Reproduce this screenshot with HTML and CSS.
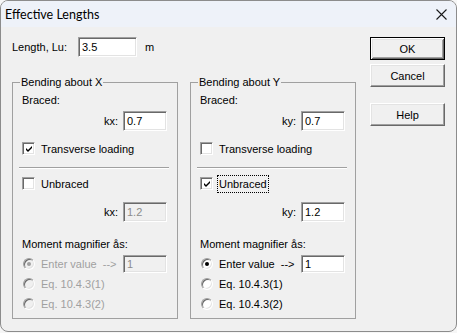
FILE: index.html
```html
<!DOCTYPE html>
<html>
<head>
<meta charset="utf-8">
<link rel="stylesheet" href="styles.css">
</head>
<body>
<div class="window">
  <div class="titlebar">
    <span class="title">Effective Lengths</span>
    <svg class="close" viewBox="0 0 11 11"><path d="M0.5 0.5 L10.5 10.5 M10.5 0.5 L0.5 10.5" stroke="#1a1a1a" stroke-width="1.1" fill="none"/></svg>
  </div>
  <div class="content">
    <div class="main">
      <div class="length-row">
        <span class="lbl">Length, Lu:</span>
        <span class="field len">3.5</span>
        <span class="unit">m</span>
      </div>
      <div class="groups">
        <div class="group">
          <div class="gtitle">Bending about X</div>
          <div class="trow braced">Braced:</div>
          <div class="frow first"><span>kx:</span><span class="field k">0.7</span></div>
          <div class="crow first"><span class="check"><svg viewBox="0 0 9 9"><polygon points="1,3 3,5 7,1 7,3 3,7 1,5" fill="#000"/></svg></span><span>Transverse loading</span></div>
          <div class="sep"></div>
          <div class="crow second"><span class="check"></span><span>Unbraced</span></div>
          <div class="frow second"><span>kx:</span><span class="field k disabled">1.2</span></div>
          <div class="trow moment">Moment magnifier ås:</div>
          <div class="rrow first disabled"><span class="radio on"></span><span>Enter value&nbsp; --&gt;</span><span class="field one disabled">1</span></div>
          <div class="rrow disabled"><span class="radio"></span><span>Eq. 10.4.3(1)</span></div>
          <div class="rrow disabled"><span class="radio"></span><span>Eq. 10.4.3(2)</span></div>
        </div>
        <div class="group">
          <div class="gtitle">Bending about Y</div>
          <div class="trow braced">Braced:</div>
          <div class="frow first"><span>ky:</span><span class="field k">0.7</span></div>
          <div class="crow first"><span class="check"></span><span>Transverse loading</span></div>
          <div class="sep"></div>
          <div class="crow second"><span class="check"><svg viewBox="0 0 9 9"><polygon points="1,3 3,5 7,1 7,3 3,7 1,5" fill="#000"/></svg></span><span class="focus">Unbraced</span></div>
          <div class="frow second"><span>ky:</span><span class="field k">1.2</span></div>
          <div class="trow moment">Moment magnifier ås:</div>
          <div class="rrow first"><span class="radio on"></span><span>Enter value&nbsp; --&gt;</span><span class="field one">1</span></div>
          <div class="rrow"><span class="radio"></span><span>Eq. 10.4.3(1)</span></div>
          <div class="rrow"><span class="radio"></span><span>Eq. 10.4.3(2)</span></div>
        </div>
      </div>
    </div>
    <div class="buttons">
      <div class="btn default">OK</div>
      <div class="btn cancel">Cancel</div>
      <div class="btn help">Help</div>
    </div>
  </div>
</div>
</body>
</html>
```
FILE: styles.css
```css
* { box-sizing: border-box; }
html, body { margin: 0; padding: 0; }
body {
  background: #f6f6f6;
  font-family: "Liberation Sans", Arial, sans-serif;
  font-size: 11px;
  color: #000;
}
.window {
  width: 457px;
  height: 332px;
  border: 1px solid #8c8c8c;
  border-radius: 8px;
  overflow: hidden;
  background: #f0f0f0;
  display: flex;
  flex-direction: column;
}
.titlebar {
  height: 26px;
  flex: none;
  background: #eef2f9;
  display: flex;
  align-items: center;
  justify-content: space-between;
  padding: 0 9px 0 4px;
}
.title {
  font-family: Lato, "Noto Sans", sans-serif;
  font-size: 12.5px;
  color: #000;
}
.close { width: 11px; height: 11px; display: block; }
.content {
  display: flex;
  padding: 10px 0 0 11px;
}
.main { width: 344px; flex: none; }
.length-row { display: flex; align-items: center; height: 20px; }
.lbl { width: 66px; }
.unit { margin-left: 8px; }
.field {
  height: 20px;
  background: #fff;
  border: 1px solid;
  border-color: #a0a0a0 #fff #fff #a0a0a0;
  box-shadow: inset 1px 1px #696969, inset -1px -1px #e3e3e3;
  padding: 0 3px;
  display: flex;
  align-items: center;
  white-space: nowrap;
}
.field.disabled { background: #f0f0f0; color: #8c8c8c; }
.len { width: 59px; }
.k { width: 44px; }
.one { width: 44px; height: 18px; margin-left: auto; }
.groups { display: flex; gap: 12px; margin-top: 25px; }
.group {
  width: 166px;
  height: 237px;
  border: 1px solid #a0a0a0;
  padding-left: 9px;
}
.gtitle {
  height: 14px;
  line-height: 14px;
  margin: -8px 0 0 -2px;
  padding: 0 1px;
  background: #f0f0f0;
  width: fit-content;
}
.trow { height: 14px; line-height: 14px; }
.braced { margin-top: 4px; }
.moment { margin-top: 15px; }
.frow {
  height: 20px;
  display: flex;
  justify-content: flex-end;
  align-items: center;
  gap: 5px;
  padding-right: 10px;
}
.frow.first { margin-top: 4px; }
.frow.second { margin-top: 12px; }
.crow { height: 13px; display: flex; align-items: center; gap: 6px; }
.crow.first { margin-top: 11px; }
.crow.second { margin-top: 8px; }
.check {
  width: 13px;
  height: 13px;
  flex: none;
  background: #fff;
  border: 1px solid;
  border-color: #a0a0a0 #fff #fff #a0a0a0;
  box-shadow: inset 1px 1px #696969, inset -1px -1px #e3e3e3;
  display: flex;
  align-items: center;
  justify-content: center;
}
.check svg { width: 9px; height: 9px; display: block; margin: 1px 0 0 1px; }
.focus {
  border: 1px dotted #000;
  padding: 1px 1px;
  margin-left: -2px;
  line-height: 14px;
}
.sep {
  margin: 12px 0 0 -3px;
  width: 150px;
  height: 2px;
  border-top: 1px solid #a0a0a0;
  border-bottom: 1px solid #fff;
}
.rrow {
  height: 20px;
  display: flex;
  align-items: center;
  gap: 6px;
  padding-left: 1px;
  padding-right: 10px;
}
.rrow.first { margin-top: 3px; }
.rrow.disabled { color: #a0a0a0; }
.radio {
  width: 12px;
  height: 12px;
  flex: none;
  border-radius: 50%;
  background: #fff;
  border: 1px solid;
  border-color: #a0a0a0 #fff #fff #a0a0a0;
  box-shadow: inset 1px 1px #696969, inset -1px -1px #e3e3e3;
  display: flex;
  align-items: center;
  justify-content: center;
}
.radio.on::after {
  content: "";
  width: 4px;
  height: 4px;
  border-radius: 50%;
  background: #000;
}
.rrow.disabled .radio { background: #f0f0f0; }
.rrow.disabled .radio.on::after { background: #a0a0a0; }
.buttons {
  margin-left: 14px;
  display: flex;
  flex-direction: column;
}
.btn {
  width: 75px;
  height: 23px;
  background: #f0f0f0;
  border: 1px solid;
  border-color: #fff #696969 #696969 #fff;
  box-shadow: inset -1px -1px #a0a0a0, inset 1px 1px #e3e3e3;
  display: flex;
  align-items: center;
  justify-content: center;
}
.btn.default {
  border: 1px solid #000;
  box-shadow: inset 1px 1px #fff, inset -1px -1px #696969, inset 2px 2px #e3e3e3, inset -2px -2px #a0a0a0;
}
.cancel { margin-top: 4px; }
.help { margin-top: 16px; }
```
